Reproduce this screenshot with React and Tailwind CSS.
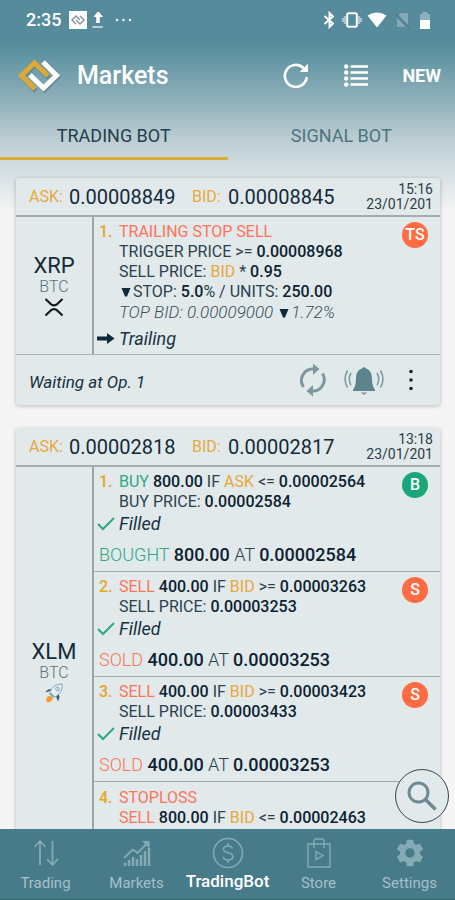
const badgeColors = {
  buy: 'bg-[#17a779]',
  sell: 'bg-[#ff6c43]',
};

function Logo() {
  return (
    <svg className="h-9 w-11" viewBox="0 0 44 36">
      <g fill="none" strokeLinecap="butt" strokeWidth="5">
        <g stroke="#51707b" opacity="0.5" transform="translate(1 1)">
          <path d="M31 19 L17.500 5 L4.500 18 L18 32" />
          <path d="M13 17 L26.500 31 L39.500 18 L26 4" />
        </g>
        <path d="M31 18 L17.500 5 L4.500 17.500 L18 31" stroke="#dca935" />
        <path d="M13 17 L26.500 30 L39.500 17.500 L26 4" stroke="#fff" />
      </g>
    </svg>
  );
}

function StatusBar() {
  return (
    <div className="flex h-10 items-center justify-between pr-6 pl-[26px] text-white">
      <div className="flex items-center">
        <span className="w-[43px] text-lg font-medium">2:35</span>
        <svg className="h-[18px] w-[18px]" viewBox="0 0 18 18">
          <rect width="18" height="18" fill="#fff" />
          <g fill="none" stroke="#8b999f" strokeWidth="1.500">
            <path d="M11 9 L7 5 L3 9 L7 13" />
            <path d="M7 9 L11 13 L15 9 L11 5" />
          </g>
        </svg>
        <svg className="ml-1 h-5 w-4" viewBox="0 0 16 20">
          <path d="M5.500 2 H8 L12 7 H8.800 V13 H5.200 V7 H2.500 L6.500 2 Z" fill="#fff" />
          <path d="M1.500 17 H12" stroke="#c4d7dd" strokeWidth="1.800" />
        </svg>
        <svg className="ml-[7px] h-3 w-5" viewBox="0 0 20 12" fill="#e7f0f3">
          <circle cx="3" cy="6" r="1.300" />
          <circle cx="9.500" cy="6" r="1.300" />
          <circle cx="16" cy="6" r="1.300" />
        </svg>
      </div>
      <div className="flex items-center">
        <svg className="h-5 w-4" viewBox="0 0 16 20" fill="none" stroke="#fff" strokeWidth="1.900">
          <path d="M2.500 6 L11 13.500 L7.500 17 V3 L11 6.500 L2.500 14" />
        </svg>
        <svg className="ml-1 h-5 w-5" viewBox="0 0 20 20">
          <path d="M3 6 V14 M1 8 V12 M17 6 V14 M19 8 V12" stroke="#a9c5ce" strokeWidth="2.200" />
          <rect x="5.200" y="3.200" width="9.600" height="13.600" rx="1.500" fill="none" stroke="#fff" strokeWidth="2" />
        </svg>
        <svg className="ml-[5px] h-5 w-5" viewBox="0 0 20 20">
          <path d="M0.500 5.500 Q10 -0.500 19.500 5.500 L10 17.500 Z" fill="#fff" />
        </svg>
        <svg className="ml-2 h-5 w-4" viewBox="0 0 16 20">
          <path d="M6 3 H13 V16 L3 6 Z M2 8 L11 17 H2 Z" fill="#84a8b4" />
          <path d="M1 4 L15 18" stroke="#4d7a89" strokeWidth="1.300" />
        </svg>
        <svg className="ml-2 h-5 w-3" viewBox="0 0 12 20">
          <path d="M1 4 H3.500 V2 H8.500 V4 H11 V10 H1 Z" fill="#8cb0bd" />
          <path d="M1 10 H11 V19 H1 Z" fill="#fff" />
        </svg>
      </div>
    </div>
  );
}

function Header() {
  return (
    <header>
      <StatusBar />
      <div className="flex h-[72px] items-center pr-[14px] pl-[17px] text-white">
        <Logo />
        <h1 className="ml-4 flex-1 text-[25px] font-medium">Markets</h1>
        <button aria-label="Refresh" type="button">
          <svg className="h-7 w-7" viewBox="0 0 28 28" fill="none" stroke="#fff">
            <path d="M24.800 15 A11 11 0 1 1 21.500 6" strokeWidth="2.600" />
            <path d="M25.500 2.500 V9.500 H18.500 Z" fill="#fff" strokeWidth="1" />
          </svg>
        </button>
        <button aria-label="List" className="ml-[34px]" type="button">
          <svg className="h-6 w-6" viewBox="0 0 24 24" fill="#fff">
            <circle cx="2.200" cy="2.500" r="2.200" />
            <circle cx="2.200" cy="8.500" r="2.200" />
            <circle cx="2.200" cy="14.500" r="2.200" />
            <circle cx="2.200" cy="20.500" r="2.200" />
            <path d="M6.500 2.500 H24 M6.500 8.500 H24 M6.500 14.500 H24 M6.500 20.500 H24" stroke="#fff" strokeWidth="2.600" />
          </svg>
        </button>
        <button className="ml-[34px] text-lg font-bold" type="button">
          NEW
        </button>
      </div>
      <div className="flex h-12 text-center text-lg" role="tablist">
        <button aria-selected="true" className="flex-1 border-b-[3px] border-[#dfac33] pt-[3px] text-[#243f4b]" role="tab" type="button">
          TRADING BOT
        </button>
        <button aria-selected="false" className="flex-1 border-b-[3px] border-transparent pt-[3px] text-[#4d747f]" role="tab" type="button">
          SIGNAL BOT
        </button>
      </div>
    </header>
  );
}

function Bold({ children }) {
  return <span className="font-medium text-[#0d2231]">{children}</span>;
}

function Amber({ children }) {
  return <span className="text-[#eaa73a]">{children}</span>;
}

function Down() {
  return (
    <svg className="mx-[2px] inline h-[10px] w-[10px] align-baseline" viewBox="0 0 10 10">
      <path d="M0.500 1 H9.500 L6 9.500 H4 Z" fill="#0d2a3c" />
    </svg>
  );
}

function Check() {
  return (
    <svg className="h-5 w-[18px]" viewBox="0 0 18 20" fill="none" stroke="#2ea882" strokeWidth="2">
      <path d="M1 10 L6 15 L17 4" />
    </svg>
  );
}

function Arrow() {
  return (
    <svg className="h-5 w-[18px]" viewBox="0 0 18 20" fill="#0d2a3c">
      <path d="M0 7.500 H10 V4 L17.500 9.500 L10 15 V11.500 H0 Z" />
    </svg>
  );
}

function Step({ number, badge, kind, children }) {
  return (
    <div className="flex">
      <span className="w-[25px] shrink-0 pl-[5px] font-medium text-[#e6a625]">{number}.</span>
      <div className="flex-1 whitespace-nowrap">{children}</div>
      {badge && (
        <span className={`mr-3 flex h-[26px] w-[26px] shrink-0 items-center justify-center rounded-full text-base font-medium text-white ${badgeColors[kind]}`}>
          {badge}
        </span>
      )}
    </div>
  );
}

function State({ icon, children }) {
  return (
    <div className="flex pl-[3px] text-lg leading-5 text-[#173142] italic">
      {icon}
      <span className="ml-1">{children}</span>
    </div>
  );
}

function Operation({ number, side, amount, source, sign, trigger, price, filledPrice }) {
  const buy = side === 'BUY';
  const color = buy ? 'text-[#2ea882]' : 'text-[#ff7358]';
  return (
    <li className="border-b border-[#9fabad] pt-[5px] pb-[6px]">
      <Step badge={buy ? 'B' : 'S'} kind={buy ? 'buy' : 'sell'} number={number}>
        <p>
          <span className={color}>{side}</span> <Bold>{amount}</Bold> IF <Amber>{source}</Amber> {sign} <Bold>{trigger}</Bold>
        </p>
        <p>
          {side} PRICE: <Bold>{price}</Bold>
        </p>
      </Step>
      <div className="mt-[2px]">
        <State icon={<Check />}>Filled</State>
      </div>
      <p className="mt-[11px] pl-[5px] text-lg leading-5 font-light">
        <span className={color}>{buy ? 'BOUGHT' : 'SOLD'}</span> <Bold>{amount}</Bold> AT <Bold>{filledPrice}</Bold>
      </p>
    </li>
  );
}

function MarketCard({ ask, bid, time, coin, icon, footer, children }) {
  return (
    <article className="rounded-[3px] bg-[#e1e9eb] shadow-[0_1px_4px_rgba(0,0,0,0.25)]">
      <div className="flex h-[39px] items-center border-b-2 border-[#a2adaf] pr-[7px] pl-[13px] whitespace-nowrap">
        <span className="w-10 text-base text-[#e6aa3c]">ASK:</span>
        <span className="w-[123px] text-xl text-[#132a39]">{ask}</span>
        <span className="w-9 text-base text-[#e6aa3c]">BID:</span>
        <span className="flex-1 text-xl text-[#132a39]">{bid}</span>
        <time className="text-right text-sm leading-[15px] text-[#2b3c46]">
          {time}
          <br />
          23/01/201
        </time>
      </div>
      <div className="flex">
        <div className="flex w-[78px] shrink-0 flex-col items-center justify-center border-r-2 border-[#99a5a8]">
          <h2 className="text-[22px] leading-[22px] text-[#142b39]">{coin}</h2>
          <span className="text-base leading-5 font-light text-[#5b7079]">BTC</span>
          {icon}
        </div>
        <ol className="flex-1 text-base leading-5 text-[#2b414d]">{children}</ol>
      </div>
      {footer}
    </article>
  );
}

function CardFooter() {
  return (
    <div className="flex h-[51px] items-center border-t border-[#aab5b7] pr-[26px] pl-[13px]">
      <p className="flex-1 pt-[6px] text-[17px] text-[#173142] italic">Waiting at Op. 1</p>
      <button aria-label="Restart" type="button">
        <svg className="h-[34px] w-[26px]" viewBox="0 0 26 34" fill="none" stroke="#7b989f" strokeWidth="3">
          <path d="M3.500 24 A11.500 11.500 0 0 1 14 6" />
          <path d="M13 0.500 L19.500 6 L13 12 Z" fill="#7b989f" stroke="none" />
          <path d="M22.500 10.500 A11.500 11.500 0 0 1 12 28" />
          <path d="M13 22 L6.500 28 L13 33.500 Z" fill="#7b989f" stroke="none" />
        </svg>
      </button>
      <button aria-label="Alerts" className="ml-[18px]" type="button">
        <svg className="h-8 w-10" viewBox="0 0 40 32" fill="none" stroke="#7b989f" strokeWidth="1.500">
          <path d="M9 25.500 Q12 22 12 15 C12 8.500 14.500 5.500 18 4.500 A2.200 2.200 0 0 1 22 4.500 C25.500 5.500 28 8.500 28 15 Q28 22 31 25.500 V27 H9 Z" fill="#5d838c" stroke="none" />
          <path d="M16.500 28.500 H23.500 L20 31 Z" fill="#7b989f" stroke="none" />
          <path d="M7 9 Q3.500 15 7 21 M3.500 6.500 Q-1.500 15 3.500 23.500 M33 9 Q36.500 15 33 21 M36.500 6.500 Q41.500 15 36.500 23.500" />
        </svg>
      </button>
      <button aria-label="More" className="ml-6" type="button">
        <svg className="h-6 w-[6px]" viewBox="0 0 6 24" fill="#15273a">
          <circle cx="3" cy="3.500" r="1.800" />
          <circle cx="3" cy="12" r="1.800" />
          <circle cx="3" cy="20.500" r="1.800" />
        </svg>
      </button>
    </div>
  );
}

function XrpIcon() {
  return (
    <svg className="h-5 w-5" viewBox="0 0 20 20" fill="none" stroke="#18191b" strokeWidth="2.200">
      <path d="M1.500 2 L6.500 6.800 Q10 9.800 13.500 6.800 L18.500 2" />
      <path d="M1.500 18.500 L6.500 13.700 Q10 10.700 13.500 13.700 L18.500 18.500" />
    </svg>
  );
}

function Rocket() {
  return (
    <svg className="h-5 w-5" viewBox="0 0 20 20">
      <path d="M6 8 L1 9.500 L4 6.500 L8 6 Z M12 13 L14 18.500 L15.500 14 L14.500 10 Z" fill="#37566d" />
      <path d="M6 9 C8 4 12 1 18 1 C19 7 16 11 11 14 Z" fill="#e4eef2" stroke="#8ba4b0" strokeWidth="1" />
      <circle cx="13.500" cy="6" r="1.900" fill="#c7dce5" stroke="#819baa" strokeWidth="0.800" />
      <path d="M6 9 L11 14 L9 15 L5 11 Z" fill="#8fa9b6" />
      <path d="M3 14 C5 12 9 13 8.500 16.500 C8 19 4.500 18 4 20 C2 18 2 16 3 14 Z" fill="#f49a27" />
    </svg>
  );
}

function TradingIcon() {
  return (
    <svg className="h-[30px] w-[30px]" viewBox="0 0 30 30" fill="none" stroke="currentColor" strokeWidth="1.800">
      <path d="M9 27 V3 M3.500 9 L9 3 L14.500 9" />
      <path d="M21.500 3 V27 M16 21 L21.500 27 L27 21" />
    </svg>
  );
}

function MarketsIcon() {
  return (
    <svg className="h-[30px] w-[30px]" viewBox="0 0 30 30" fill="none" stroke="currentColor">
      <path d="M3 28 V25 M7 28 V22 M11 28 V19 M15 28 V21 M19 28 V17 M23 28 V13 M27 28 V10" strokeWidth="2.500" />
      <path d="M2 20 L11 11.500 L15.500 15 L25.500 5" strokeWidth="1.800" />
      <path d="M20 3 H27.500 V10.500 Z" fill="currentColor" stroke="none" />
    </svg>
  );
}

function BotIcon() {
  return (
    <svg className="h-8 w-8" viewBox="0 0 32 32" fill="none" stroke="currentColor" strokeWidth="1.600">
      <circle cx="16" cy="16" r="14.500" />
      <path d="M20.500 11.500 C19.500 9.500 18 9 16 9 C13 9 11.500 10.500 11.500 12.300 C11.500 17 20.800 14.500 20.800 19.500 C20.800 21.800 18.800 23 16 23 C13.500 23 11.800 22 11.200 20 M16 6 V9 M16 23 V26" />
    </svg>
  );
}

function StoreIcon() {
  return (
    <svg className="h-[30px] w-[26px]" viewBox="0 0 26 30" fill="none" stroke="currentColor" strokeWidth="1.400">
      <path d="M2 6 H24 V29 H2 Z M8 10 V3 Q8 1 10 1 H16 Q18 1 18 3 V10 M10 13.500 L17 17.500 L10 21.500 Z" />
    </svg>
  );
}

function SettingsIcon() {
  return (
    <svg className="h-8 w-8" viewBox="0 0 24 24" fill="currentColor">
      <path d="M19.430 12.980c.04-.32.070-.64.070-.98s-.03-.66-.070-.98l2.110-1.650c.19-.15.240-.42.120-.64l-2-3.460c-.12-.22-.39-.3-.61-.22l-2.490 1c-.52-.4-1.080-.73-1.690-.98l-.38-2.650C14.460 2.180 14.250 2 14 2h-4c-.25 0-.46.180-.49.420l-.38 2.650c-.61.250-1.170.59-1.690.98l-2.490-1c-.23-.09-.49 0-.61.220l-2 3.460c-.13.220-.07.490.12.640l2.110 1.650c-.04.320-.07.650-.07.980s.03.660.070.980l-2.110 1.650c-.19.150-.24.420-.12.640l2 3.460c.12.220.39.300.61.220l2.490-1c.52.400 1.080.730 1.690.980l.38 2.650c.03.240.24.420.49.420h4c.25 0 .46-.18.490-.42l.38-2.650c.61-.25 1.170-.59 1.690-.98l2.490 1c.23.090.490 0 .61-.22l2-3.460c.12-.22.070-.49-.12-.64l-2.110-1.650zM12 15.500c-1.930 0-3.500-1.570-3.500-3.500s1.570-3.500 3.500-3.500 3.500 1.570 3.500 3.500-1.570 3.500-3.500 3.500z" />
    </svg>
  );
}

const tabs = [
  { label: 'Trading', Icon: TradingIcon },
  { label: 'Markets', Icon: MarketsIcon },
  { label: 'TradingBot', Icon: BotIcon, active: true },
  { label: 'Store', Icon: StoreIcon },
  { label: 'Settings', Icon: SettingsIcon },
];

function BottomNav() {
  return (
    <nav className="grid h-[71px] shrink-0 grid-cols-5 border-b border-[#34616e] bg-[#487b89]">
      {tabs.map(({ label, Icon, active }) => (
        <a className="flex flex-col items-center pt-2 text-[#83aab5]" href="#" key={label}>
          <span className="flex h-8 items-center">
            <Icon />
          </span>
          <span className={active ? 'text-[17px] leading-6 font-medium text-white' : 'pt-[2px] text-[15px] leading-6 text-[#a3c0c9]'}>{label}</span>
        </a>
      ))}
    </nav>
  );
}

export default function App() {
  return (
    <div className="flex h-screen flex-col overflow-hidden bg-[#f5f5f5] bg-[linear-gradient(#568b9b_0px,#568b9b_42px,#6497a5_60px,#8fb0ba_100px,#bccdd3_140px,#d5dfe4_172px,#f5f5f5_212px)] font-['Roboto','Liberation_Sans',sans-serif]">
      <Header />
      <div className="relative min-h-0 flex-1">
        <main className="flex h-full flex-col gap-[23px] overflow-hidden pt-[18px] pr-[15px] pl-4 [&>*]:shrink-0">
          <MarketCard ask="0.00008849" bid="0.00008845" coin="XRP" footer={<CardFooter />} icon={<XrpIcon />} time="15:16">
            <li className="pt-[5px] pb-[5px]">
              <Step badge="TS" kind="sell" number={1}>
                <p className="text-[#ff7358]">TRAILING STOP SELL</p>
                <p>
                  TRIGGER PRICE &gt;= <Bold>0.00008968</Bold>
                </p>
                <p>
                  SELL PRICE: <Amber>BID</Amber> * <Bold>0.95</Bold>
                </p>
                <p>
                  <Down />
                  STOP: <Bold>5.0</Bold>% / UNITS: <Bold>250.00</Bold>
                </p>
                <p className="text-[17px] leading-5 font-light text-[#3c4f59] italic">
                  TOP BID: 0.00009000 <Down />
                  1.72%
                </p>
              </Step>
              <div className="mt-[7px]">
                <State icon={<Arrow />}>Trailing</State>
              </div>
            </li>
          </MarketCard>

          <MarketCard ask="0.00002818" bid="0.00002817" coin="XLM" icon={<Rocket />} time="13:18">
            <Operation amount="800.00" filledPrice="0.00002584" number={1} price="0.00002584" side="BUY" sign="<=" source="ASK" trigger="0.00002564" />
            <Operation amount="400.00" filledPrice="0.00003253" number={2} price="0.00003253" side="SELL" sign=">=" source="BID" trigger="0.00003263" />
            <Operation amount="400.00" filledPrice="0.00003253" number={3} price="0.00003433" side="SELL" sign=">=" source="BID" trigger="0.00003423" />
            <li className="pt-[6px] pb-12">
              <Step number={4}>
                <p className="text-[#ff7358]">STOPLOSS</p>
                <p>
                  <span className="text-[#ff7358]">SELL</span> <Bold>800.00</Bold> IF <Amber>BID</Amber> &lt;= <Bold>0.00002463</Bold>
                </p>
              </Step>
            </li>
          </MarketCard>
        </main>

        <button
          aria-label="Search"
          className="absolute right-[6px] bottom-[6px] flex h-[54px] w-[54px] items-center justify-center rounded-full border border-[#33474f] bg-[#e1e9eb]"
          type="button"
        >
          <svg className="h-8 w-8" viewBox="0 0 32 32" fill="none" stroke="#6e8b94">
            <circle cx="12.500" cy="12.500" r="9.500" strokeWidth="3" />
            <path d="M19.500 19.500 L29.500 29.500" strokeWidth="3.600" />
          </svg>
        </button>
      </div>
      <BottomNav />
    </div>
  );
}
